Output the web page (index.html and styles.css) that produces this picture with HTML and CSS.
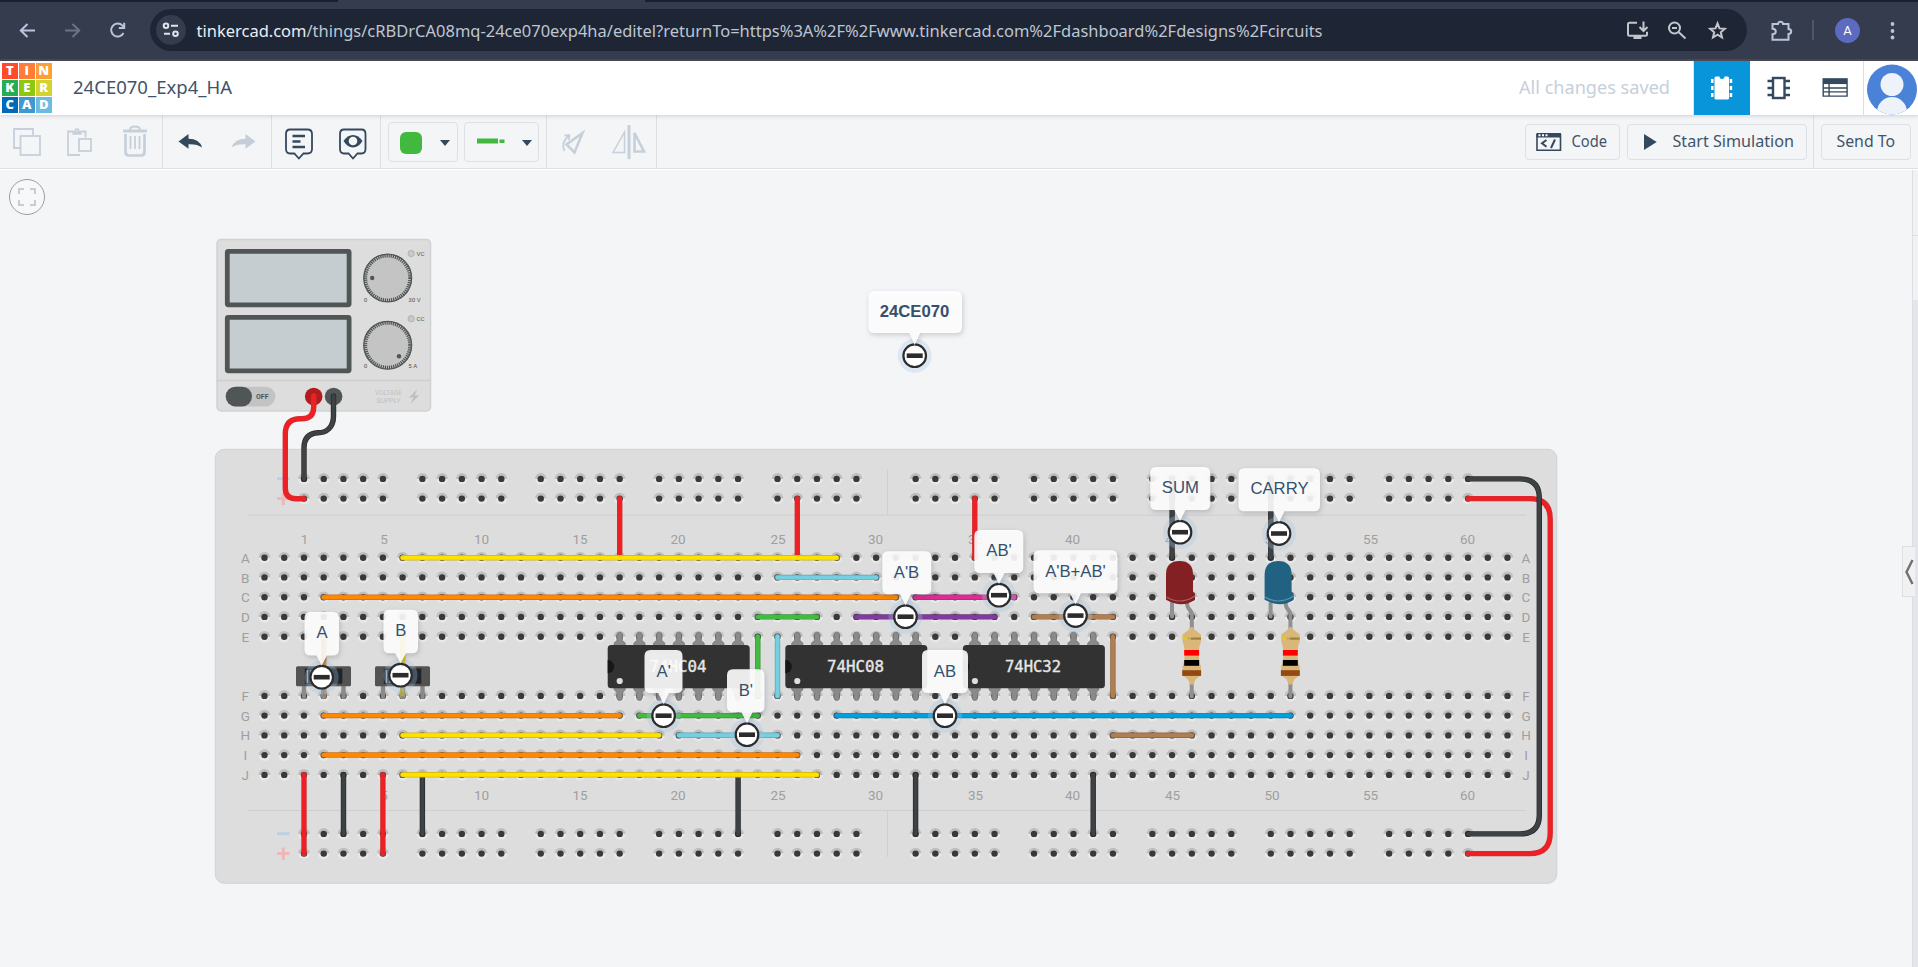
FILE: index.html
```html
<!DOCTYPE html>
<html lang="en">
<head>
<meta charset="utf-8">
<title>24CE070_Exp4_HA</title>
<link rel="stylesheet" href="styles.css">
</head>
<body>
<div class="tabstrip"><i class="tab-active"></i></div>
<nav class="browser">
  <svg class="nav-btn" viewBox="5 8 45 45"><path class="bi" d="M35 30.5H21M27.5 24l-6.7 6.5 6.7 6.5"/></svg>
  <svg class="nav-btn" viewBox="50 8 45 45"><path class="bi off" d="M65 30.5H79M72.500 24l6.700 6.500-6.700 6.500"/></svg>
  <svg class="nav-btn" viewBox="95 8 45 45"><path class="bi" d="M123.500 33a6.500 6.500 0 1 1-1-7.300l1.600 1.800M124.200 22.800v5.200h-5.400"/></svg>
  <div class="omnibox">
    <span class="site-info"><svg viewBox="156 16 30 30"><g class="bi light"><circle cx="166" cy="26.700" r="2.300"/><path d="M171 26.700h7M164 34.800h6"/><circle cx="175.500" cy="34.800" r="2.300"/></g></svg></span>
    <svg class="url" width="1422" height="42" viewBox="196 10 1422 42"><text x="196.500" y="38" textLength="1126" lengthAdjust="spacingAndGlyphs"><tspan class="domain">tinkercad.com</tspan>/things/cRBDrCA08mq-24ce070exp4ha/editel?returnTo=https%3A%2F%2Fwww.tinkercad.com%2Fdashboard%2Fdesigns%2Fcircuits</text></svg>
    <svg class="pill-btn" viewBox="1618 11 40 40"><path class="bi gray" d="M1637 23.700h-7.500q-1.500 0-1.500 1.500v10q0 1.500 1.500 1.500h16q1.500 0 1.500-1.500v-2.500M1643.500 22.500v9M1639.500 28l4 4 4-4"/><path d="M1633.500 37h8v3h-8z" fill="#c3c6cc"/></svg>
    <svg class="pill-btn" viewBox="1658 11 40 40"><g class="bi gray"><circle cx="1674.500" cy="29" r="5.500"/><path d="M1678.500 33l7 6.500M1672 29h5"/></g></svg>
    <svg class="pill-btn" viewBox="1698 11 40 40"><path class="bi gray" d="M1717.500 24.500l2 4.900 5.300.4-4 3.500 1.200 5.200-4.500-2.800-4.500 2.800 1.200-5.200-4-3.500 5.300-.4z"/></svg>
  </div>
  <svg class="ext" viewBox="1757 8 46 45"><path class="bi" d="M1772.500 24h5.500q.3-2.300 2.500-2.300t2.500 2.300h5.500v5q2.700.2 2.700 2.500t-2.700 2.500v5.700h-16v-5.500q3.300-.2 3.300-2.700t-3.300-2.700z"/></svg>
  <i class="bar-sep"></i>
  <span class="profile">A</span>
  <svg class="more" viewBox="1876 8 32 45"><g fill="#b9c5dc"><circle cx="1892.500" cy="24" r="1.900"/><circle cx="1892.500" cy="31" r="1.900"/><circle cx="1892.500" cy="37.500" r="1.900"/></g></svg>
</nav>

<header class="app-head">
  <div class="logo"><b class="t1">T</b><b class="t2">I</b><b class="t3">N</b><b class="t4">K</b><b class="t5">E</b><b class="t6">R</b><b class="t7">C</b><b class="t8">A</b><b class="t9">D</b></div>
  <svg class="title" width="170" height="54"><text x="0" y="33" textLength="159" lengthAdjust="spacingAndGlyphs">24CE070_Exp4_HA</text></svg>
  <svg class="status" width="160" height="54"><text x="1" y="33" textLength="151" lengthAdjust="spacingAndGlyphs">All changes saved</text></svg>
  <div class="views">
    <svg class="view on" viewBox="1694 61 56 54"><path fill="#fff" d="M1716 76.500h3.500q0 2.500 2.500 2.500t2.500-2.500h3q1.500 0 1.500 1.500v20q0 1.500-1.500 1.500h-11.500q-1.500 0-1.500-1.500v-20q0-1.500 1.500-1.500z"/><path fill="#fff" d="M1711 79h2.500v4h-2.500zM1711 86h2.500v4h-2.500zM1711 93h2.500v4h-2.500zM1729.700 79h2.500v4h-2.500zM1729.700 86h2.500v4h-2.500zM1729.700 93h2.500v4h-2.500z"/></svg>
    <svg class="view" viewBox="1750 61 56 54"><g fill="none" stroke="#34495e" stroke-width="2.400"><rect x="1773" y="78" width="11.500" height="20"/><path d="M1767.500 81h5M1767.500 88h5M1767.500 95h5M1785 81h5M1785 88h5M1785 95h5"/></g></svg>
    <svg class="view last" viewBox="1805.500 61 58 54"><path fill="#34495e" d="M1822.300 78h25.700v6h-25.700z"/><path fill="none" stroke="#34495e" stroke-width="1.400" d="M1823 84v12.300h24.300V84M1823 88h24.300M1823 92h24.300M1829 84v12"/></svg>
  </div>
  <svg class="user" viewBox="1864 61 54 54"><defs><clipPath id="face"><circle cx="1892" cy="89.500" r="25"/></clipPath></defs><g clip-path="url(#face)"><path fill="#4a82d8" d="M1864 61h54v54h-54z"/><circle cx="1892" cy="84.500" r="11.500" fill="#edf2fb"/><circle cx="1892" cy="112" r="15" fill="#edf2fb"/></g></svg>
</header>

<div class="toolbar">
  <div class="group">
    <svg class="tool" viewBox="0 115 54 54"><g class="ti off"><path d="M20.500 148H14v-19h19v6"/><rect x="20.500" y="136" width="19.500" height="19"/></g></svg>
    <svg class="tool" viewBox="54 115 54 54"><g class="ti off"><path d="M73.500 131.500H68V155h12M80.500 131.500h5v6"/><rect x="79" y="139" width="12" height="12"/><path stroke-width="3.500" d="M72.500 133h9"/><circle cx="77" cy="131" r="1.800"/></g></svg>
    <svg class="tool" viewBox="108 115 54 54"><g class="ti off"><path stroke-width="3" d="M123 131h24"/><path d="M130 130q0-3.500 5-3.500t5 3.500M130.500 136v13M135 136v13M139.500 136v13"/><path stroke-width="2.700" d="M125.500 134v18q0 3.500 3.500 3.500h12q3.500 0 3.500-3.500v-18"/></g></svg>
  </div>
  <div class="group">
    <svg class="tool" viewBox="163 115 54 54"><path fill="#34495e" d="M178.500 141.500l10-7.500v4.800q11 .2 13.700 8.700q-5-3.700-13.700-3.300v4.600z"/></svg>
    <svg class="tool" viewBox="217.500 115 54 54"><path fill="#c3ced9" d="M256 141.500l-10-7.500v4.800q-11 .2-14 8.700q5-3.700 14-3.300v4.600z"/></svg>
  </div>
  <div class="group">
    <svg class="tool" viewBox="272 115 54 54"><g class="ti" stroke-width="2.200"><path d="M290 129.500h17.500q4.500 0 4.500 4.500v15q0 4.500-4.500 4.500h-4l-4.600 5-4.600-5H290q-4 0-4-4.500v-15q0-4.500 4-4.500z"/><path stroke-width="2.700" d="M292.500 136h12.500M292.500 141.500h8M292.500 147h12.500"/></g></svg>
    <svg class="tool" viewBox="326 115 54 54"><path class="ti" d="M344 129.500h17.500q4 0 4 4.500v15q0 4.500-4 4.500h-4l-4.500 5-4.500-5H344q-4 0-4-4.500v-15q0-4.500 4-4.500z"/><path fill="#34495e" d="M343.500 141q4-6 9.500-6t9.500 6q-4 6.500-9.500 6.500t-9.500-6.500z"/><circle cx="353" cy="141" r="4.300" fill="#f4f5f7"/></svg>
  </div>
  <div class="group picks">
    <span class="pick color"><i></i><b></b></span>
    <span class="pick wire-type"><svg width="28" height="6"><path fill="#41b93f" d="M0 .5h21v5H0zM22.500 1.500h5v3.500h-5z"/></svg><b></b></span>
  </div>
  <div class="group flips">
    <svg class="tool" viewBox="547 115 54 54"><g class="ti off"><path stroke-width="2.600" d="M582.500 133l-16 11.500 8 8z"/><path d="M564.500 151q-4-8 4-15M564.500 135.500l4.800-.2-.3 5"/></g></svg>
    <svg class="tool" viewBox="601 115 54 54"><g class="ti off"><path stroke-width="3" d="M629 125v34"/><path stroke-width="1.500" d="M624.500 132v20.500h-11.500z"/><path stroke-width="2.600" d="M634.500 133v18.500h9.500z"/></g></svg>
  </div>
  <div class="actions">
    <span class="btn code"><svg width="93" height="34" viewBox="1526 125 93 34"><path fill="#34495e" d="M1536.500 133h24.500v4.500h-24.500z"/><g fill="none" stroke="#34495e" stroke-width="1.600"><path d="M1537 134v16.200h23.500V134"/><path stroke-width="2" d="M1546.500 140l-4.500 3.300 4.500 3.400M1555 139.500l-4 8.500"/></g><path fill="#fff" d="M1538.500 134.200h2v2h-2zM1542 134.200h2v2h-2zM1545.500 134.200h2v2h-2z"/><text x="1571.500" y="147" textLength="35.500" lengthAdjust="spacingAndGlyphs">Code</text></svg></span>
    <span class="btn start"><svg width="178" height="34" viewBox="1628 125 178 34"><path fill="#34495e" d="M1644 134l12.700 8-12.700 8z"/><text x="1672.500" y="147" textLength="121.500" lengthAdjust="spacingAndGlyphs">Start Simulation</text></svg></span>
    <i class="split"></i>
    <span class="btn send"><svg width="88" height="34" viewBox="1822 125 88 34"><text x="1836.500" y="147" textLength="58.500" lengthAdjust="spacingAndGlyphs">Send To</text></svg></span>
  </div>
</div>

<main class="workspace">
<svg class="canvas" width="1912" height="797" viewBox="0 170 1912 797">
<defs>
  <g id="h1"><path fill="#bebebe" d="M-5.800 0a5.800 5.800 0 0 1 11.600 0z"/><path fill="#e8e8e8" d="M-5.800 0a5.800 5.800 0 0 0 11.600 0z"/><circle r="3.200" fill="#393939"/></g>
  <g id="h2"><use href="#h1"/><use href="#h1" x="19.730"/></g>
  <g id="h4"><use href="#h2"/><use href="#h2" x="39.460"/></g>
  <g id="h8"><use href="#h4"/><use href="#h4" x="78.920"/></g>
  <g id="h16"><use href="#h8"/><use href="#h8" x="157.840"/></g>
  <g id="h32"><use href="#h16"/><use href="#h16" x="315.680"/></g>
  <g id="row"><use href="#h32"/><use href="#h32" x="631.360"/></g>
  <g id="h5"><use href="#h4"/><use href="#h1" x="78.920"/></g>
  <g id="rail5"><use href="#h5"/><use href="#h5" x="118.380"/><use href="#h5" x="236.760"/><use href="#h5" x="355.140"/><use href="#h5" x="473.520"/></g>
  <g id="rail"><use href="#rail5"/><use href="#rail5" x="611.630"/></g>
  <g id="half"><use href="#row" y="557.700"/><use href="#row" y="577.400"/><use href="#row" y="597.200"/><use href="#row" y="616.900"/><use href="#row" y="636.700"/></g>
  <g id="nums">
    <text x="304.500">1</text><text x="384">5</text><text x="481.500">10</text><text x="580">15</text><text x="678">20</text><text x="778">25</text><text x="875.500">30</text><text x="975.500">35</text><text x="1072.500">40</text><text x="1172.500">45</text><text x="1272">50</text><text x="1370.500">55</text><text x="1467.500">60</text>
  </g>
  <g id="letters">
    <text y="562.700">A</text><text y="582.500">B</text><text y="602">C</text><text y="621.800">D</text><text y="641.500">E</text><text y="701">F</text><text y="720.700">G</text><text y="740.300">H</text><text y="760">I</text><text y="779.800">J</text>
  </g>
  <g id="polarity" fill="none" stroke-width="3"><path stroke="#b9d0e6" d="M277 478.700h12.500"/><path stroke="#ecb8b8" d="M277 498.600h12.500M283.300 492.500v12.500"/></g>
  <path id="pin" d="M-2.800 3v-5.500a2.800 2.800 0 0 1 5.600 0V3l2.800 2.500V9H-5.600V5.500z"/>
  <g id="pins"><use href="#pin"/><use href="#pin" x="19.730"/><use href="#pin" x="39.460"/><use href="#pin" x="59.190"/><use href="#pin" x="78.920"/><use href="#pin" x="98.650"/><use href="#pin" x="118.380"/></g>
  <g id="chip">
    <g fill="#8a8a8a" stroke="#6a6a6a" stroke-width=".6"><use href="#pins" x="619.700" y="637.500"/><g transform="translate(619.700 695.300) scale(1 -1)"><use href="#pins"/></g></g>
    <rect x="607.700" y="645" width="142" height="43.300" rx="3.500" fill="#323232"/>
    <path fill="#171717" d="M607.700 660a6.600 6.600 0 0 1 0 13.200z"/><circle cx="619.700" cy="681" r="3.100" fill="#dedede"/>
  </g>
  <g id="switch">
    <path stroke="#8a8a8a" stroke-width="4.400" stroke-linecap="round" d="M304 686v11M323.700 686v11M343.500 686v11"/>
    <rect x="296" y="666.300" width="55" height="20" rx="1.500" fill="#535353"/><path fill="#1f242a" d="M304.800 668.500h37.500v15.300h-37.500z"/><path fill="#2d3f4e" d="M309 669.500h19v13.500h-19z"/><path stroke="#98a4ae" stroke-width="1.500" d="M307.500 670v13M311 670v13"/>
  </g>
  <g id="resistor">
    <path stroke="#909090" stroke-width="4" fill="none" stroke-linecap="round" d="M1191.700 680v16.500"/>
    <path fill="#dab678" d="M1191 627h1.500l2.500 3 6 4.500v7q-2 5-2 9v7q0 4 2 9v8.500l-5.500 4.500-2 5h-3.500l-2-5-5.500-4.500v-8.500q2-5 2-9v-7q0-4-2-9v-7l6-4.500z"/>
    <path fill="#ddd020" d="M1182.500 637.700h5v1.800h-5z"/><path fill="#98853a" d="M1191 637.500h10v2.200h-10z"/><path fill="#c8a951" d="M1187.500 637.700h3.500v1.800h-3.500z"/>
    <path fill="#f00" d="M1184.200 650h14.900v5.600h-14.900z"/><path d="M1184.200 660h14.900v5.800h-14.900z"/><path fill="#924a12" d="M1182.200 670.200h18.900v5.700h-18.900z"/>
  </g>
  <g id="led">
    <path stroke="#909090" stroke-width="4" fill="none" stroke-linecap="round" d="M1172 603v13.500M1187 603q0 4 2.500 6.500t2.300 6V629"/>
    <path d="M1166 599.800V574.500q0-13.500 13.500-13.500t13.500 13.500v17l2 2v6.500q-13.500 8.500-29-.2z"/>
    <path fill="none" stroke="#fff" stroke-opacity=".3" stroke-width="1.200" d="M1166.500 597q14 8.500 28.500-1"/>
  </g>
  <path id="w-yellow" d="M402.700 557.700H836.700M402.700 735.300H659.100M402.700 774.700H817M402.700 637V696"/>
  <path id="w-orange" d="M323.700 597.200H895.900M323.700 715.600H619.700M323.700 755H797.300M323.700 637V696"/>
  <path id="w-cyan" d="M777.500 577.400H876.200M678.900 735.300H777.500M777.500 636.600V696"/>
  <path id="w-green" d="M757.800 616.900H817M639.400 715.600H757.800M757.800 636.600V696"/>
  <path id="w-purple" d="M856.400 616.900H994.600"/>
  <path id="w-pink" d="M915.600 597.200H1014.300"/>
  <path id="w-blue" d="M836.700 715.600H1290.500"/>
  <path id="w-brown" d="M1034 616.900H1112.900M1112.900 735.300H1191.900M1112.900 636.600V696"/>
  <path id="w-red" d="M619.700 498.600V557M797.300 498.600V557M974.800 498.600V557.700M304 774.700V853.600M382.900 774.700V853.600M1468.100 498.600H1530Q1550.200 498.600 1550.200 519V833Q1550.200 853.600 1530 853.600H1468.100M313.700 396V407Q313.700 418.700 302 418.700H300Q285.300 418.700 285.300 434V488Q285.300 498.700 296 498.700H304"/>
  <path id="w-black" d="M343.500 774.700V833.900M422.400 774.700V833.900M738.100 774.700V833.900M915.600 774.700V833.900M1093.200 774.700V833.900M1172.100 478.900V557.700M1270.800 478.900V557.700M1468.100 478.900H1520Q1539.300 478.900 1539.300 498V815Q1539.300 833.900 1520 833.900H1468.100M333.500 396V416C333.500 428 326 432.800 318 432.800Q304 433.500 304 448V478.900"/>
  <g id="marker"><circle r="17" fill="#a6c8e6" fill-opacity=".3"/><circle r="11.300" fill="#fff" stroke="#2c2c2c" stroke-width="2.200"/><path fill="#2c2c2c" d="M-8-2.300H8V2.300H-8z"/></g>
</defs>

<g class="fit"><circle cx="27" cy="197" r="17.500"/><path d="M19 194v-5h5M30 189h5v5M35 200v5h-5M24 205h-5v-5"/></g>

<g class="supply">
  <rect x="217" y="239.500" width="213.500" height="171.500" rx="4" fill="#ddd" stroke="#d0d1d2" stroke-width="1.500"/>
  <path stroke="#cfcfcf" stroke-width="1.500" d="M217 380.500h213.500"/>
  <g fill="#c5cdd1" stroke="#505655" stroke-width="4.800"><rect x="227.300" y="251.300" width="121.800" height="53.500" rx="1"/><rect x="227.300" y="317.300" width="121.800" height="53.500" rx="1"/></g>
  <g fill="#c4c4c4"><circle cx="387.700" cy="278" r="24"/><circle cx="387.700" cy="345.200" r="24"/></g>
  <g fill="none" stroke="#505655"><g stroke-width="3.500" stroke-dasharray="1.250 .9"><circle cx="387.700" cy="278" r="22.300"/><circle cx="387.700" cy="345.200" r="22.300"/></g><g stroke-width="1.300"><circle cx="387.700" cy="278" r="23.900"/><circle cx="387.700" cy="345.200" r="23.900"/></g></g>
  <g fill="#505655"><circle cx="372.200" cy="278" r="2.200"/><circle cx="399" cy="356.200" r="2.200"/></g>
  <g fill="#c8c8c8" stroke="#adadad" stroke-width=".8"><circle cx="411.200" cy="253.500" r="3.200"/><circle cx="411.200" cy="318.700" r="3.200"/></g>
  <g class="tiny"><text x="416.500" y="255.800">VC</text><text x="416.500" y="321">CC</text><text x="363.700" y="302.300">0</text><text x="363.700" y="368">0</text><text x="408.300" y="302.300">30 V</text><text x="408.300" y="368">5 A</text></g>
  <rect x="225.700" y="386.700" width="49.700" height="19.700" rx="9.850" fill="#c3c3c3"/><rect x="225.700" y="386.700" width="26.300" height="19.700" rx="9.850" fill="#505655"/>
  <text class="off-label" x="256" y="399.300" textLength="12.500" lengthAdjust="spacingAndGlyphs">OFF</text>
  <circle cx="313.700" cy="396.500" r="8.800" fill="#b21c1f"/><circle cx="333.600" cy="396.500" r="8.800" fill="#505655"/>
  <g class="brand"><text x="388.500" y="395.200" textLength="27" lengthAdjust="spacingAndGlyphs">VOLTAGE</text><text x="388.500" y="402.900" textLength="24" lengthAdjust="spacingAndGlyphs">SUPPLY</text></g>
  <path fill="#bfbfbf" d="M417.500 389l-8.500 8.500h4.500l-2.800 6.300 8.500-8.500h-4.500z"/>
</g>

<rect x="215.300" y="449.300" width="1341.500" height="434" rx="9" fill="#ddd" stroke="#d1d2d3"/>
<path stroke="#cfcfcf" d="M248 515.200h1278M248 810.500h1278M887.500 469v46M887.500 811v46"/>
<g class="legend">
  <use href="#nums" y="543.600"/><use href="#nums" y="800.200"/>
  <use href="#letters" x="245.300"/><use href="#letters" x="1526"/>
</g>
<use href="#polarity"/><use href="#polarity" y="355"/>
<use href="#half" x="264.500"/><use href="#half" x="264.500" y="138.200"/>
<use href="#rail" x="304" y="478.900"/><use href="#rail" x="304" y="498.600"/><use href="#rail" x="304" y="833.900"/><use href="#rail" x="304" y="853.600"/>

<use href="#chip"/><use href="#chip" x="177.600"/><use href="#chip" x="355.200"/>
<g class="part"><text x="678" y="672" textLength="57" lengthAdjust="spacingAndGlyphs">74HC04</text><text x="855.500" y="672" textLength="57" lengthAdjust="spacingAndGlyphs">74HC08</text><text x="1033" y="672" textLength="56" lengthAdjust="spacingAndGlyphs">74HC32</text></g>

<g class="wire">
  <use href="#w-red" stroke="#cf3134"/><use href="#w-red" stroke="#ee2024" class="core"/>
  <use href="#w-black" stroke="#26292b"/><use href="#w-black" stroke="#3e4244" class="core"/>
  <use href="#w-yellow" stroke="#c9b11c"/><use href="#w-yellow" stroke="#ffe100" class="core"/>
  <use href="#w-orange" stroke="#c9701a"/><use href="#w-orange" stroke="#ff8800" class="core"/>
  <use href="#w-cyan" stroke="#5aa6b3"/><use href="#w-cyan" stroke="#74d0e0" class="core"/>
  <use href="#w-green" stroke="#3a963a"/><use href="#w-green" stroke="#41bb41" class="core"/>
  <use href="#w-purple" stroke="#653480"/><use href="#w-purple" stroke="#803b9d" class="core"/>
  <use href="#w-pink" stroke="#b0287a"/><use href="#w-pink" stroke="#dd2c93" class="core"/>
  <use href="#w-blue" stroke="#0a82b5"/><use href="#w-blue" stroke="#00a0de" class="core"/>
  <use href="#w-brown" stroke="#8d6643"/><use href="#w-brown" stroke="#b07e50" class="core"/>
</g>
<use href="#switch"/><use href="#switch" x="79"/>
<g fill="none" stroke-width="2.500" stroke-opacity=".7"><path stroke="#b5713a" stroke-width="1.500" d="M323.700 687v9"/><path stroke="#c8bb20" d="M402.700 687v9"/><path stroke="#c96c08" stroke-width="3.500" stroke-opacity="1" d="M323.700 640v27"/><path stroke="#d4c012" stroke-width="3.500" stroke-opacity="1" d="M402.700 640v25"/></g>
<g fill="#822023"><use href="#led"/></g><g fill="#216283"><use href="#led" x="98.600"/></g>
<use href="#resistor"/><use href="#resistor" x="98.700"/>

<g class="notes">
  <use href="#marker" x="914.700" y="355.700"/><use href="#marker" x="321.700" y="677.200"/><use href="#marker" x="400.500" y="675.200"/><use href="#marker" x="663.600" y="715.700"/><use href="#marker" x="747" y="734.700"/><use href="#marker" x="945" y="715.700"/><use href="#marker" x="905.500" y="616.700"/><use href="#marker" x="999" y="595.200"/><use href="#marker" x="1075.500" y="615.600"/><use href="#marker" x="1180" y="532.200"/><use href="#marker" x="1279" y="533.500"/>
  <g class="bubble">
    <path d="M874.500 291h81.500q6 0 6 6v30q0 6-6 6h-35.800l-5.500 12-5.500-12h-34.700q-6 0-6-6v-30q0-6 6-6z"/>
    <path d="M310.500 612h22.500q6 0 6 6v31.500q0 6-6 6h-6l-5.300 10-5.300-10h-5.900q-6 0-6-6v-31.500q0-6 6-6z"/>
    <path d="M389.500 609.700h22.500q6 0 6 6v31.500q0 6-6 6h-6l-5.500 10-5.300-10h-5.700q-6 0-6-6v-31.500q0-6 6-6z"/>
    <path d="M650.500 650h26q6 0 6 6v31q0 6-6 6h-7.400l-5.500 11-5.500-11h-7.600q-6 0-6-6v-31q0-6 6-6z"/>
    <path d="M733 669.300h25.500q6 0 6 6v31q0 6-6 6h-6l-5.500 11-5.500-11h-8.500q-6 0-6-6v-31q0-6 6-6z"/>
    <path d="M928 650h34q6 0 6 6v31q0 6-6 6h-11.500l-5.500 11-5.500-11h-11.500q-6 0-6-6v-31q0-6 6-6z"/>
    <path d="M888.300 551.200h37q6 0 6 6v31q0 6-6 6h-14.300l-5.500 11-5.500-11h-11.700q-6 0-6-6v-31q0-6 6-6z"/>
    <path d="M980.300 530h37q6 0 6 6v31q0 6-6 6h-12.800l-5.500 11-5.500-11h-13.200q-6 0-6-6v-31q0-6 6-6z"/>
    <path d="M1039.500 550.200h72q6 0 6 6v31q0 6-6 6H1081l-5.500 11-5.500-11h-30.500q-6 0-6-6v-31q0-6 6-6z"/>
    <path d="M1156.300 467h48q6 0 6 6v31q0 6-6 6h-18.800l-5.500 11-5.500-11h-18.200q-6 0-6-6v-31q0-6 6-6z"/>
    <path d="M1244.500 468.300h69.500q6 0 6 6v31q0 6-6 6h-29.500l-5.500 11-5.500-11h-29q-6 0-6-6v-31q0-6 6-6z"/>
  </g>
  <text class="strong" x="914.500" y="316.800">24CE070</text>
  <text x="322" y="638.300">A</text><text x="400.700" y="636.200">B</text><text x="663.700" y="676.900">A'</text><text x="745.800" y="696">B'</text><text x="945" y="676.900">AB</text><text x="906.500" y="578">A'B</text><text x="999" y="556">AB'</text><text x="1075.500" y="576.700">A'B+AB'</text><text x="1180.300" y="493">SUM</text><text x="1279.500" y="494.300">CARRY</text>
</g>
</svg>
<aside class="side"><i class="side-top"></i><i class="side-next"></i><span class="handle"><svg width="12" height="50"><path fill="none" stroke="#6f6f6f" stroke-width="2.400" d="M9.500 13l-6 12 6 12"/></svg></span></aside>
</main>
</body>
</html>
```
FILE: styles.css
```css
* { box-sizing: border-box; }
html, body { margin: 0; height: 100%; overflow: hidden; }
body { display: flex; flex-direction: column; background: #f4f5f7; font-family: "Noto Sans", "Open Sans", sans-serif; color: #34495e; }
svg { display: block; flex: none; }
i, b { display: block; }

.tabstrip { height: 2px; flex: none; background: #182031; padding-left: 338px; }
.tab-active { width: 307px; height: 2px; background: #343c4d; }
.browser { height: 59px; flex: none; display: flex; align-items: center; padding: 0 10px 1px 5px; background: #343c4d; border-bottom: 2px solid #48494e; }
.nav-btn { width: 45px; height: 45px; }
.bi { fill: none; stroke: #b9c5dc; stroke-width: 2; }
.bi.off { stroke: #6b7384; }
.bi.light { stroke: #dfe3ea; }
.bi.gray { stroke: #c3c6cc; }
.omnibox { width: 1597px; height: 42px; margin-left: 10px; border-radius: 21px; background: #1e2635; display: flex; align-items: center; padding-left: 6px; flex: none; }
.site-info { width: 30px; height: 30px; border-radius: 50%; background: #343c4d; margin-right: 10px; flex: none; }
.url { font-size: 16.500px; fill: #bfc5d1; }
.url .domain { fill: #e9edf5; }
.pill-btn { width: 40px; height: 40px; }
.ext { width: 46px; height: 45px; margin-left: 10px; }
.bar-sep { width: 2px; height: 20px; background: #4d566a; margin: 0 21px 0 9px; }
.profile { width: 25px; height: 25px; border-radius: 50%; background: #5c6bc0; color: #fff; font: 13px/25px Roboto, sans-serif; text-align: center; }
.more { width: 32px; height: 45px; margin-left: 16px; }

.app-head { height: 54px; flex: none; display: flex; background: #fff; box-shadow: 0 1px 4px rgba(60, 80, 100, .22); position: relative; }
.logo { width: 50px; height: 50px; margin: 2px 0 0 2px; display: grid; grid-template-columns: repeat(3, 15.500px); grid-auto-rows: 15.500px; gap: 1.500px; flex: none; }
.logo b { color: #fff; font: 800 13px/15.500px "Open Sans", sans-serif; text-align: center; }
.t1 { background: #ff4b2a; } .t2 { background: #ff7d38; } .t3 { background: #ff9e33; }
.t4 { background: #27ae54; } .t5 { background: #8dc80e; } .t6 { background: #d3d22f; }
.t7 { background: #0069b8; } .t8 { background: #3f98cf; } .t9 { background: #6cbbe3; }
.title { margin-left: 21px; font-size: 17.500px; fill: #41546a; }
.status { margin-left: auto; margin-right: 15px; font-size: 17.500px; fill: #c6d0db; }
.views { display: flex; border-left: 1px solid #dfe3e8; }
.view { width: 56px; height: 54px; }
.view.on { background: #0895d9; }
.view.last { width: 58px; border-right: 1px solid #dbdfe4; }
.user { width: 54px; height: 54px; }

.toolbar { height: 55px; flex: none; display: flex; border-bottom: 1px solid #fff; box-shadow: inset 0 -1px #dcdfe4; background: #f4f5f7; }
.group { display: flex; border-right: 1px solid #dcdfe4; height: 53px; flex: none; }
.flips { width: 110px; }
.tool { width: 54px; height: 54px; }
.ti { fill: none; stroke: #34495e; stroke-width: 1.800; }
.ti.off { stroke: #c6d0db; }
.picks { width: 166px; padding: 7px 7px 0; gap: 6px; }
.pick { height: 40px; border: 1px solid #dde0e5; border-radius: 4px; display: flex; align-items: center; }
.pick.color { width: 70px; padding-left: 11px; gap: 18px; }
.pick.color i { width: 22px; height: 22px; border-radius: 6px; background: #41b93f; margin-top: 2px; }
.pick.wire-type { width: 76px; padding-left: 12px; gap: 17px; }
.pick.wire-type svg { margin-top: -3px; }
.pick b { border: 5px solid transparent; border-top: 6px solid #34495e; border-bottom: 0; margin-top: 2px; }
.actions { display: flex; margin-left: auto; padding-right: 7px; align-items: flex-start; }
.btn { height: 36px; margin-top: 9px; border: 1px solid #dde0e5; border-radius: 4px; font-size: 16.500px; fill: #41546a; }
.start { margin-left: 7px; }
.split { width: 1px; height: 53px; background: #dcdfe4; margin: 0 7px 0 6px; }

.workspace { flex: 1; display: flex; min-height: 0; }
.canvas { font-family: Roboto, sans-serif; }
.fit { fill: #f7f8fa; stroke: #9c9c9c; stroke-width: 1; }
.fit path { fill: none; stroke: #bdbdbd; stroke-width: 1.500; }
.side { width: 6px; flex: none; background: #e4e5ea; border-left: 1px solid #dce0e6; position: relative; }
.side-top { height: 65px; background: #f1f1f3; }
.side-next { height: 65px; background: #f1f1f3; border-top: 1px solid #dce0e6; }
.handle { position: absolute; left: -11px; top: 376px; width: 13px; height: 51px; background: #f1f1f3; border: 1px solid #dce0e6; border-right: 0; }
.tiny { font-size: 6.200px; fill: #505655; }
.off-label { font-size: 7px; font-weight: 700; fill: #505655; }
.brand { font-size: 7.500px; fill: #c1c1c1; text-anchor: middle; }
.legend { font-size: 13.500px; fill: #9f9f9f; text-anchor: middle; }
.part { font-family: "DejaVu Sans Mono", monospace; font-size: 15.800px; fill: #e6e6e6; stroke: #e6e6e6; stroke-width: .4; text-anchor: middle; }
.wire { fill: none; stroke-width: 5.400; stroke-linecap: round; }
.wire .core { stroke-width: 4; }
.notes { font-family: "Liberation Sans", sans-serif; font-size: 16.700px; fill: #34506e; text-anchor: middle; }
.notes .strong { font-weight: 700; }
.bubble { fill: #fff; fill-opacity: .9; filter: drop-shadow(1px 2px 2.500px rgba(50, 60, 80, .25)); }
```
